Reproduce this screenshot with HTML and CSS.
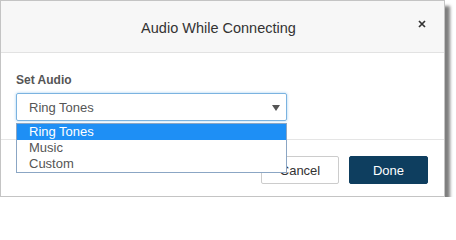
FILE: index.html
```html
<!DOCTYPE html>
<html>
<head>
<meta charset="utf-8">
<link rel="stylesheet" href="styles.css">
</head>
<body>
<div class="dialog">
  <div class="header">
    <div class="title">Audio While Connecting</div>
    <div class="close"><svg width="8" height="8" viewBox="0 0 8 8"><path d="M1 1L7 7M7 1L1 7" stroke="#333" stroke-width="1.7"/></svg></div>
  </div>
  <div class="body">
    <div class="label">Set Audio</div>
    <div class="select-wrap">
      <div class="select">
        <span>Ring Tones</span>
        <svg class="arrow" width="8" height="6" viewBox="0 0 8 6"><path d="M0 0H8L4 6Z" fill="#555"/></svg>
      </div>
      <div class="list">
        <div class="opt sel">Ring Tones</div>
        <div class="opt">Music</div>
        <div class="opt">Custom</div>
      </div>
    </div>
  </div>
  <div class="footer">
    <button class="btn cancel">Cancel</button>
    <button class="btn done">Done</button>
  </div>
</div>
</body>
</html>
```
FILE: styles.css
```css
html, body { margin: 0; padding: 0; background: #fff; }
body { font-family: "Liberation Sans", Arial, sans-serif; color: #333; }
.dialog {
  width: 443px;
  border: 1px solid #c4c4c4;
  background: #fff;
  box-shadow: 5px 6px 3px rgba(0,0,0,0.5);
}
.header {
  height: 51px;
  background: #f7f7f7;
  border-bottom: 1px solid #e2e2e2;
  display: flex;
  align-items: center;
  justify-content: center;
  position: relative;
}
.title { font-size: 14.5px; color: #333; margin-left: -8px; margin-top: 2px; }
.close { position: absolute; right: 18px; top: 19px; line-height: 0; }
.body { height: 86px; padding: 0 0 0 15px; }
.label { font-size: 12px; font-weight: bold; color: #555; padding-top: 20px; line-height: 14px; }
.select-wrap { position: relative; width: 271px; margin-top: 6px; }
.select {
  height: 26px;
  border: 1px solid #7bb3e0;
  box-shadow: 0 0 3px rgba(102,175,233,0.6);
  border-radius: 2px;
  display: flex;
  align-items: center;
  justify-content: space-between;
  padding: 0 6px 0 12px;
  font-size: 13px;
  color: #555;
}
.arrow { margin-top: 1px; }
.list {
  position: absolute;
  left: 0; top: 30px;
  width: 269px;
  border: 1px solid #8ba6c4;
  background: #fff;
  z-index: 2;
}
.opt { height: 16px; line-height: 16px; font-size: 13px; color: #555; padding-left: 12px; }
.opt.sel { background: #1e8ff5; color: #fff; }
.footer {
  border-top: 1px solid #e5e5e5;
  display: flex;
  justify-content: flex-end;
  gap: 10px;
  padding: 16px 16px 12px 0;
}
.btn {
  height: 28px;
  width: 79px;
  font-family: "Liberation Sans", Arial, sans-serif;
  font-size: 13px;
  border-radius: 2px;
  margin: 0;
}
.cancel { background: #fff; border: 1px solid #ccc; color: #333; width: 78px; }
.done { background: #0e3e5f; border: 1px solid #0e3e5f; color: #fff; }
```
